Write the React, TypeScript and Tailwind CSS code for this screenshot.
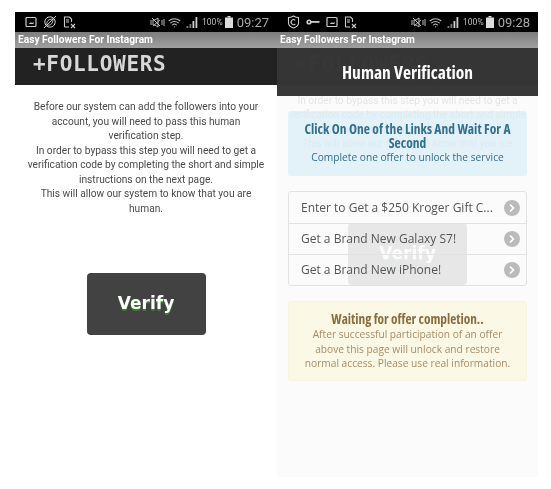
import { ChevronRight, Wifi } from "lucide-react";

const NoteIcon = () => (
  <svg width="12" height="12" viewBox="0 0 12 12" fill="none" stroke="#ccc" strokeWidth="1.2">
    <rect x="1" y="1.5" width="10" height="9" rx="1" />
    <path d="M3.5 8h5V6l-1.5 1-1-.8L3.5 8z" fill="#ccc" stroke="none" />
  </svg>
);

const LeafIcon = () => (
  <svg width="14" height="14" viewBox="0 0 14 14" fill="none" stroke="#ccc" strokeWidth="1">
    <circle cx="7" cy="7" r="5.2" />
    <path d="M1 13L13 1M4 10c-1-4 2-6 6-6 0 4-2 7-6 6z" />
  </svg>
);

const RxIcon = () => (
  <svg width="13" height="13" viewBox="0 0 13 13" fill="none" stroke="#ccc" strokeWidth="1.1">
    <path d="M1.5 11V1h5l2 2v3M1.5 11H6" />
    <path d="M3 4h3M3 6h3" />
    <path d="M8 8l4 4M12 8l-4 4" />
  </svg>
);

const ShieldIcon = () => (
  <svg width="13" height="14" viewBox="0 0 13 14" fill="none" stroke="#ccc" strokeWidth="1.1">
    <path d="M1.5 2.5C4 2.5 5 1.8 6.5 1c1.5.8 2.500 1.500 5 1.500V8c0 2.500-2.500 4.200-5 5-2.500-.8-5-2.500-5-5V2.500z" />
    <path d="M8.300 5.300A2.500 2.500 0 1 0 8.300 9" />
  </svg>
);

const KeyIcon = () => (
  <svg width="14" height="10" viewBox="0 0 14 10" fill="#ccc">
    <circle cx="3" cy="5" r="2.600" />
    <circle cx="3" cy="5" r="1" fill="#000" />
    <rect x="5" y="4" width="8.500" height="1.800" />
  </svg>
);

const MuteIcon = () => (
  <svg width="17" height="11" viewBox="0 0 17 11" fill="none" stroke="#bbb" strokeWidth="1">
    <path d="M5 3h2l3-2v9L7 8H5zM3 3v5M14 3v5M16 2v7M12 3l-7 6M4 1l8 8" />
  </svg>
);

const SignalIcon = () => (
  <svg width="13" height="13" viewBox="0 0 13 13" fill="#ccc">
    <rect x="0.500" y="10" width="1.800" height="2" opacity="0.6" />
    <rect x="3.500" y="8" width="1.800" height="4" opacity="0.6" />
    <rect x="6.500" y="5" width="1.800" height="7" />
    <rect x="9.500" y="1" width="1.800" height="11" />
  </svg>
);

const BatteryIcon = () => (
  <svg width="8" height="12" viewBox="0 0 8 12" fill="#ddd">
    <rect x="2.500" y="0" width="3" height="1.500" />
    <rect x="0" y="1.500" width="8" height="10.500" />
  </svg>
);

const StatusBar = ({ time, right }: { time: string; right?: boolean }) => (
  <div className="flex h-5 items-center justify-between bg-black pl-[10px] pr-[8px]">
    <div className="flex items-center gap-[6px]">
      {right && <ShieldIcon />}
      {right && <KeyIcon />}
      <NoteIcon />
      {!right && <LeafIcon />}
      <RxIcon />
    </div>
    <div className="flex items-center">
      <MuteIcon />
      <Wifi size={13} color="#bbb" strokeWidth={2} className="ml-[3px]" />
      <span className="ml-[5px]"><SignalIcon /></span>
      <span className="ml-[3px] text-[8.500px] text-[#bbb]">100%</span>
      <span className="ml-[2px]"><BatteryIcon /></span>
      <span className="ml-[4px] text-[13px] leading-none text-[#aaa]">{time}</span>
    </div>
  </div>
);

// the page under the popup, the right phone has it scrolled
const BasePage = ({ scrolled }: { scrolled?: boolean }) => (
  <>
    <div className="relative z-10 h-[37px] bg-[#222222] pl-[18px] pt-[6px]">
      <span className="font-['DejaVu_Sans_Mono'] text-[21px] font-bold leading-[21px] tracking-[0.7px] text-[#d8d8d8]">
        +FOLLOWERS
      </span>
    </div>
    <div className={scrolled ? "-mt-[50px] flex flex-col items-center" : "flex flex-col items-center"}>
      <p className="w-[240px] pt-[15px] text-center text-[10.200px] leading-[14.500px] text-[#4a4a4a]">
        Before our system can add the followers into your account, you will need to pass this human verification step.
        <br />
        In order to bypass this step you will need to get a verification code by completing the short and simple instructions on the next page.
        <br />
        This will allow our system to know that you are human.
      </p>
      <div className="mt-[57px] flex h-[62px] w-[119px] items-center justify-center rounded-[4px] bg-[#424242] font-['DejaVu_Sans'] text-[17px] font-bold text-white [text-shadow:0_2px_0_#3f7a35]">
        Verify
      </div>
    </div>
  </>
);

const OFFERS = ["Enter to Get a $250 Kroger Gift C...", "Get a Brand New Galaxy S7!", "Get a Brand New iPhone!"];

const Popup = () => (
  <div className="absolute inset-x-0 bottom-0 top-[36px] z-20 bg-[#fafafa]/[0.87] font-['Open_Sans']">
    <div className="flex h-12 items-start justify-center bg-[#222222]/90 pt-[12px] text-[17.500px] font-bold leading-[24px] text-white [font-stretch:75%]">
      Human Verification
    </div>
    <div className="px-[11px] pt-[15px]">
      <div className="flex h-[65px] flex-col items-center rounded-[3px] bg-[#d9edf7]/70 px-[12px] pt-[11px] text-center text-[#31708f]">
        <div className="text-[13.500px] font-bold leading-[14px] [font-stretch:75%]">
          Click On One of the Links And Wait For A Second
        </div>
        <div className="text-[10.200px] leading-[14px]">Complete one offer to unlock the service</div>
      </div>
      <div className="mt-[15px] flex flex-col rounded-[3px] border border-[#e2e2e2]">
        {OFFERS.map((offer, i) => (
          <div
            key={offer}
            className={`flex h-[31px] items-center justify-between bg-white/20 pl-3 pr-[6px] text-[12px] text-[#555] ${i > 0 ? "border-t border-[#e2e2e2]" : ""}`}
          >
            <span>{offer}</span>
            <span className="flex h-4 w-4 items-center justify-center rounded-full bg-[#bbbbbb]">
              <ChevronRight size={12} color="#fff" strokeWidth={3.500} />
            </span>
          </div>
        ))}
      </div>
      <div className="mt-[15px] flex h-[80px] flex-col items-center rounded-[3px] border border-[#faf3dd] bg-[#fcf8e6] pt-[9px] text-center text-[#8a6d3b]">
        <div className="text-[13.300px] font-bold leading-[16px] [font-stretch:75%]">Waiting for offer completion..</div>
        <div className="w-[212px] text-[10.200px] leading-[14.500px] text-[#a58d66]">
          After successful participation of an offer above this page will unlock and restore normal access. Please use real information.
        </div>
      </div>
    </div>
  </div>
);

const Phone = ({ time, right }: { time: string; right?: boolean }) => (
  <div className={`relative flex flex-col overflow-hidden font-['Roboto'] ${right ? "h-[465px] w-[261px]" : "h-[465px] w-[262px]"}`}>
    <StatusBar time={time} right={right} />
    <div className="relative z-30 flex h-4 items-center bg-gradient-to-b from-[#7d7d7d] to-[#a0a0a0] pl-[3px] text-[10.200px] font-bold text-white">
      Easy Followers For Instagram
    </div>
    <BasePage scrolled={right} />
    {right && <Popup />}
  </div>
);

const App = () => {
  return (
    <div className="h-[489px] w-[551px] overflow-hidden bg-white pl-[15px] pt-3 blur-[0.3px]">
      <div className="flex">
        <Phone time="09:27" />
        <Phone time="09:28" right />
      </div>
    </div>
  );
};

export default App;
